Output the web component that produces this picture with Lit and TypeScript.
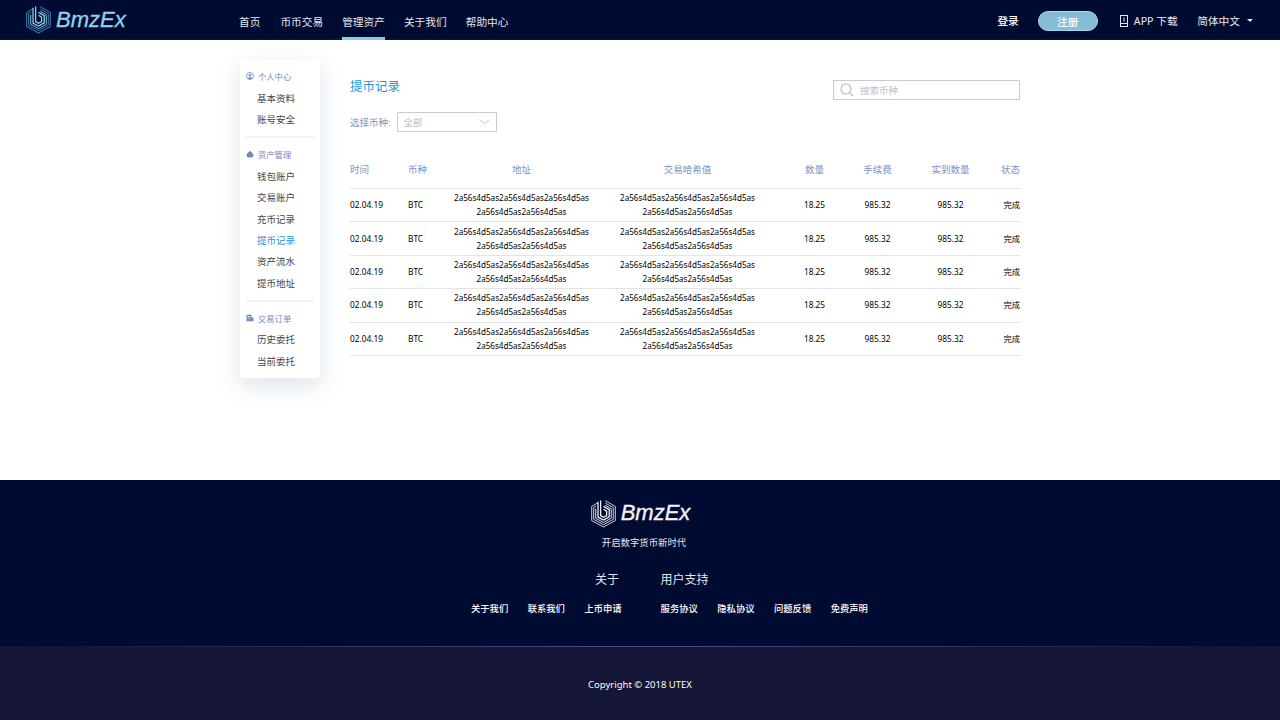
import { LitElement, html, css, svg } from "lit";
import { customElement } from "lit/decorators.js";

const logoMark = (c: string, c2: string) => svg`
  <svg class="mark" viewBox="0 0 32 34" fill="none" stroke-linejoin="miter">
    <path d="M9.5 4.2 2 8.6v16.8L16 33l14-7.6V8.6L18 1.8" stroke="${c2}" stroke-width="1"/>
    <path d="M7.5 8 4.4 9.9v14L16 30.3l11.6-6.4V10L18 4.6" stroke="${c2}" stroke-width="1"/>
    <path d="M6.8 11.4v11.2L16 27.7l9.2-5.1V11.3L18 7.3" stroke="${c}" stroke-width="1.1"/>
    <path d="M9.5 3v18.2l6.5 3.6 6.8-3.8v-8.6L16 8.6" stroke="${c}" stroke-width="1.5"/>
    <path d="M12.6 1.5v18l3.4 1.9 3.7-2v-5.2L16 12" stroke="${c}" stroke-width="1.5"/>
  </svg>`;

@customElement("app-root")
export class AppRoot extends LitElement {
  static styles = css`
    :host { display: block; width: 1280px; height: 720px; overflow: hidden; background: #fff; font-family: "Noto Sans", "Noto Sans CJK SC", sans-serif; }
    * { box-sizing: border-box; }
    .hdr { height: 40px; background: #000b32; display: flex; align-items: stretch; color: #e4e8f0; font-size: 10.7px; border-bottom: 1px solid #0a1438; }
    .brand { width: 239px; padding-left: 25px; display: flex; align-items: center; gap: 4px; }
    .mark { width: 27px; height: 29px; display: block; flex: none; }
    .word { font-family: "Liberation Sans", sans-serif; font-style: italic; font-size: 22px; color: #8fd0ea; -webkit-text-stroke: .35px currentColor; }
    .nav { display: flex; gap: 19px; flex: 1; }
    .nav a { display: flex; align-items: center; height: 40px; padding-top: 2px; position: relative; }
    .nav a:first-child { margin-right: 1px; }
    .nav a.on::after { content: ""; position: absolute; left: 0; right: 0; bottom: 0; height: 3px; background: #86cbe6; }
    .right { display: flex; align-items: center; padding-right: 27px; padding-top: 2px; }
    .login { color: #fff; font-weight: 500; margin-right: 19px; }
    .reg { width: 60px; height: 20px; border-radius: 10px; background: #85bdd8; border: 1px solid #a6d9ec; color: #fff; font-weight: 500; display: flex; align-items: center; justify-content: center; margin-right: 21px; margin-top: 1px; }
    .app { display: flex; align-items: center; gap: 5px; margin-right: 19.5px; }
    .app svg { width: 10px; height: 12px; }
    .lang { display: flex; align-items: center; gap: 7px; }
    .caret { width: 0; height: 0; border: 3px solid transparent; border-top: 3px solid #e4e8f0; border-bottom: 0; }

    .main { height: 440px; display: flex; padding: 20px 0 0 240px; gap: 30px; }
    .side { width: 80px; height: 318px; background: #fff; border-radius: 4px; box-shadow: 0 8px 24px rgba(90,130,170,.22); padding: 7px 0 0; display: flex; flex-direction: column; font-size: 9.5px; color: #444; }
    .gh { height: 20px; padding-bottom: 2px; display: flex; align-items: center; gap: 4px; padding-left: 6px; color: #7088c0; font-size: 8.3px; }
    .gh svg { width: 8px; height: 8px; flex: none; }
    .it { height: 21.35px; display: flex; align-items: center; padding-left: 17px; }
    .it.on { color: #1d96dc; }
    .div { height: 2px; background: #f0f1f3; margin: 6.5px 6px 7px; }

    .content { width: 670px; position: relative; }
    .title { font-size: 12.5px; color: #1d96dc; line-height: 18px; padding-top: 18px; height: 35px; }
    .search { position: absolute; right: 0; top: 20px; width: 187px; height: 20px; border: 1px solid #c9ccd2; display: flex; align-items: center; padding-left: 6px; gap: 6px; font-size: 9.5px; color: #bcbfc5; }
    .search svg { width: 14px; height: 14px; flex: none; }
    .pick { display: flex; align-items: center; font-size: 9.5px; color: #7c93c6; margin-top: 17px; height: 20px; }
    .sel { width: 100px; height: 20px; margin-left: 6px; border: 1px solid #c9ccd2; border-radius: 1px; display: flex; align-items: center; justify-content: space-between; padding: 0 6px; color: #bcbfc5; }
    .sel svg { width: 11px; height: 6px; }
    .grid { display: grid; grid-template-columns: 58px 36px 155px 177px 77px 49px 97px 21px; margin-top: 20.5px; }
    .th { height: 36.5px; padding-bottom: 2px; display: flex; align-items: center; justify-content: center; font-size: 9.5px; color: #7c93c6; border-bottom: 1px solid #e2e4e8; white-space: nowrap; }
    .td { height: 33.4px; display: flex; align-items: center; justify-content: center; text-align: center; font-size: 8.3px; line-height: 14px; color: #000; border-bottom: 1px solid #e2e4e8; white-space: nowrap; }
    .td.hash { font-size: 8.1px; }
    .l { justify-content: flex-start; }
    .r { justify-content: flex-end; overflow: hidden; }

    .ft { height: 167px; background: #000b32; color: #fff; display: flex; flex-direction: column; align-items: center; position: relative; }
    .fbrand { display: flex; align-items: center; gap: 4px; margin-top: 18px; height: 30px; }
    .fbrand .word { color: #f2f2f4; }
    .tag { font-size: 9.4px; margin-top: 8px; color: #e8e8ee; margin-left: 8px; line-height: 14px; }
    .cols { display: flex; width: 100%; margin-top: 21px; gap: 39px; padding-left: 471px; }
    .col { display: flex; flex-direction: column; flex: none; }
    .col h4 { margin: 0; font-weight: 400; font-size: 12px; line-height: 18px; color: #e6e6ea; }
    .links { display: flex; gap: 19.5px; margin-top: 13px; font-size: 9.3px; font-weight: 500; line-height: 14px; white-space: nowrap; }
    .c1 h4 { padding-left: 124px; }
    .line { position: absolute; left: 0; right: 0; bottom: 0; height: 1px; background: linear-gradient(90deg, #0a1438, #47528e 50%, #0a1438); }
    .copy { height: 73px; padding-top: 1px; background: #151535; color: #fff; display: flex; align-items: center; justify-content: center; font-size: 9.5px; }
  `;

  private rows = [0, 1, 2, 3, 4];
  private cell() {
    return html`2a56s4d5as2a56s4d5as2a56s4d5as<br />2a56s4d5as2a56s4d5as`;
  }

  render() {
    const items1 = ["钱包账户", "交易账户", "充币记录", "提币记录", "资产流水", "提币地址"];
    return html`
      <header class="hdr">
        <div class="brand">${logoMark("#8fd0ea", "#4f9bd8")}<span class="word">BmzEx</span></div>
        <nav class="nav">
          <a>首页</a><a>币币交易</a><a class="on">管理资产</a><a>关于我们</a><a>帮助中心</a>
        </nav>
        <div class="right">
          <span class="login">登录</span>
          <span class="reg">注册</span>
          <span class="app">
            <svg viewBox="0 0 10 12" fill="none" stroke="#e4e8f0"><rect x="1.5" y=".5" width="7" height="11"/><path d="M1.5 8.5h7M5 2.5v4" /></svg>
            APP 下载
          </span>
          <span class="lang">简体中文<i class="caret"></i></span>
        </div>
      </header>

      <main class="main">
        <aside class="side">
          <div class="gh"><svg viewBox="0 0 8 8"><circle cx="4" cy="4" r="3.5" fill="none" stroke="#7088c0" stroke-width=".8"/><circle cx="4" cy="3.2" r="1.3" fill="#7088c0"/><path d="M1.8 6.4C2.4 5 5.6 5 6.2 6.4L4 7.4z" fill="#7088c0"/></svg>个人中心</div>
          <div class="it">基本资料</div>
          <div class="it">账号安全</div>
          <div class="div"></div>
          <div class="gh"><svg viewBox="0 0 8 8"><path d="M4 .8C5 2 7.5 3.5 7.5 5.4 7.5 7 6 7.6 4 7.6S.5 7 .5 5.4C.5 3.5 3 2 4 .8z" fill="#7088c0"/></svg>资产管理</div>
          ${items1.map((t) => html`<div class="it ${t === "提币记录" ? "on" : ""}">${t}</div>`)}
          <div class="div"></div>
          <div class="gh"><svg viewBox="0 0 8 8"><path d="M.5.8h5v6.4h-5zM5.5 3.5h2v3.7h-2z" fill="#7088c0"/><path d="M1.5 2.5h3M1.5 4.2h3" stroke="#fff" stroke-width=".7"/></svg>交易订单</div>
          <div class="it">历史委托</div>
          <div class="it">当前委托</div>
        </aside>

        <section class="content">
          <div class="title">提币记录</div>
          <div class="search">
            <svg viewBox="0 0 14 14" fill="none" stroke="#b5b8be" stroke-width="1.1"><circle cx="6" cy="6" r="5"/><path d="M9.6 9.6 13 13"/></svg>
            搜索币种
          </div>
          <div class="pick">选择币种:<span class="sel">全部<svg viewBox="0 0 11 6" fill="none" stroke="#c4c7cc"><path d="M.5.5 5.5 5l5-4.5"/></svg></span></div>
          <div class="grid">
            <div class="th l">时间</div><div class="th l">币种</div><div class="th">地址</div><div class="th">交易哈希值</div>
            <div class="th">数量</div><div class="th">手续费</div><div class="th">实到数量</div><div class="th r">状态</div>
            ${this.rows.map(
              () => html`
                <div class="td l">02.04.19</div><div class="td l">BTC</div>
                <div class="td hash">${this.cell()}</div><div class="td hash">${this.cell()}</div>
                <div class="td">18.25</div><div class="td">985.32</div><div class="td">985.32</div><div class="td r">完成</div>
              `
            )}
          </div>
        </section>
      </main>

      <footer class="ft">
        <div class="fbrand">${logoMark("#f2f2f4", "#f2f2f4")}<span class="word">BmzEx</span></div>
        <div class="tag">开启数字货币新时代</div>
        <div class="cols">
          <div class="col c1"><h4>关于</h4><div class="links"><span>关于我们</span><span>联系我们</span><span>上币申请</span></div></div>
          <div class="col"><h4>用户支持</h4><div class="links"><span>服务协议</span><span>隐私协议</span><span>问题反馈</span><span>免费声明</span></div></div>
        </div>
        <div class="line"></div>
      </footer>
      <div class="copy">Copyright © 2018 UTEX</div>
    `;
  }
}
